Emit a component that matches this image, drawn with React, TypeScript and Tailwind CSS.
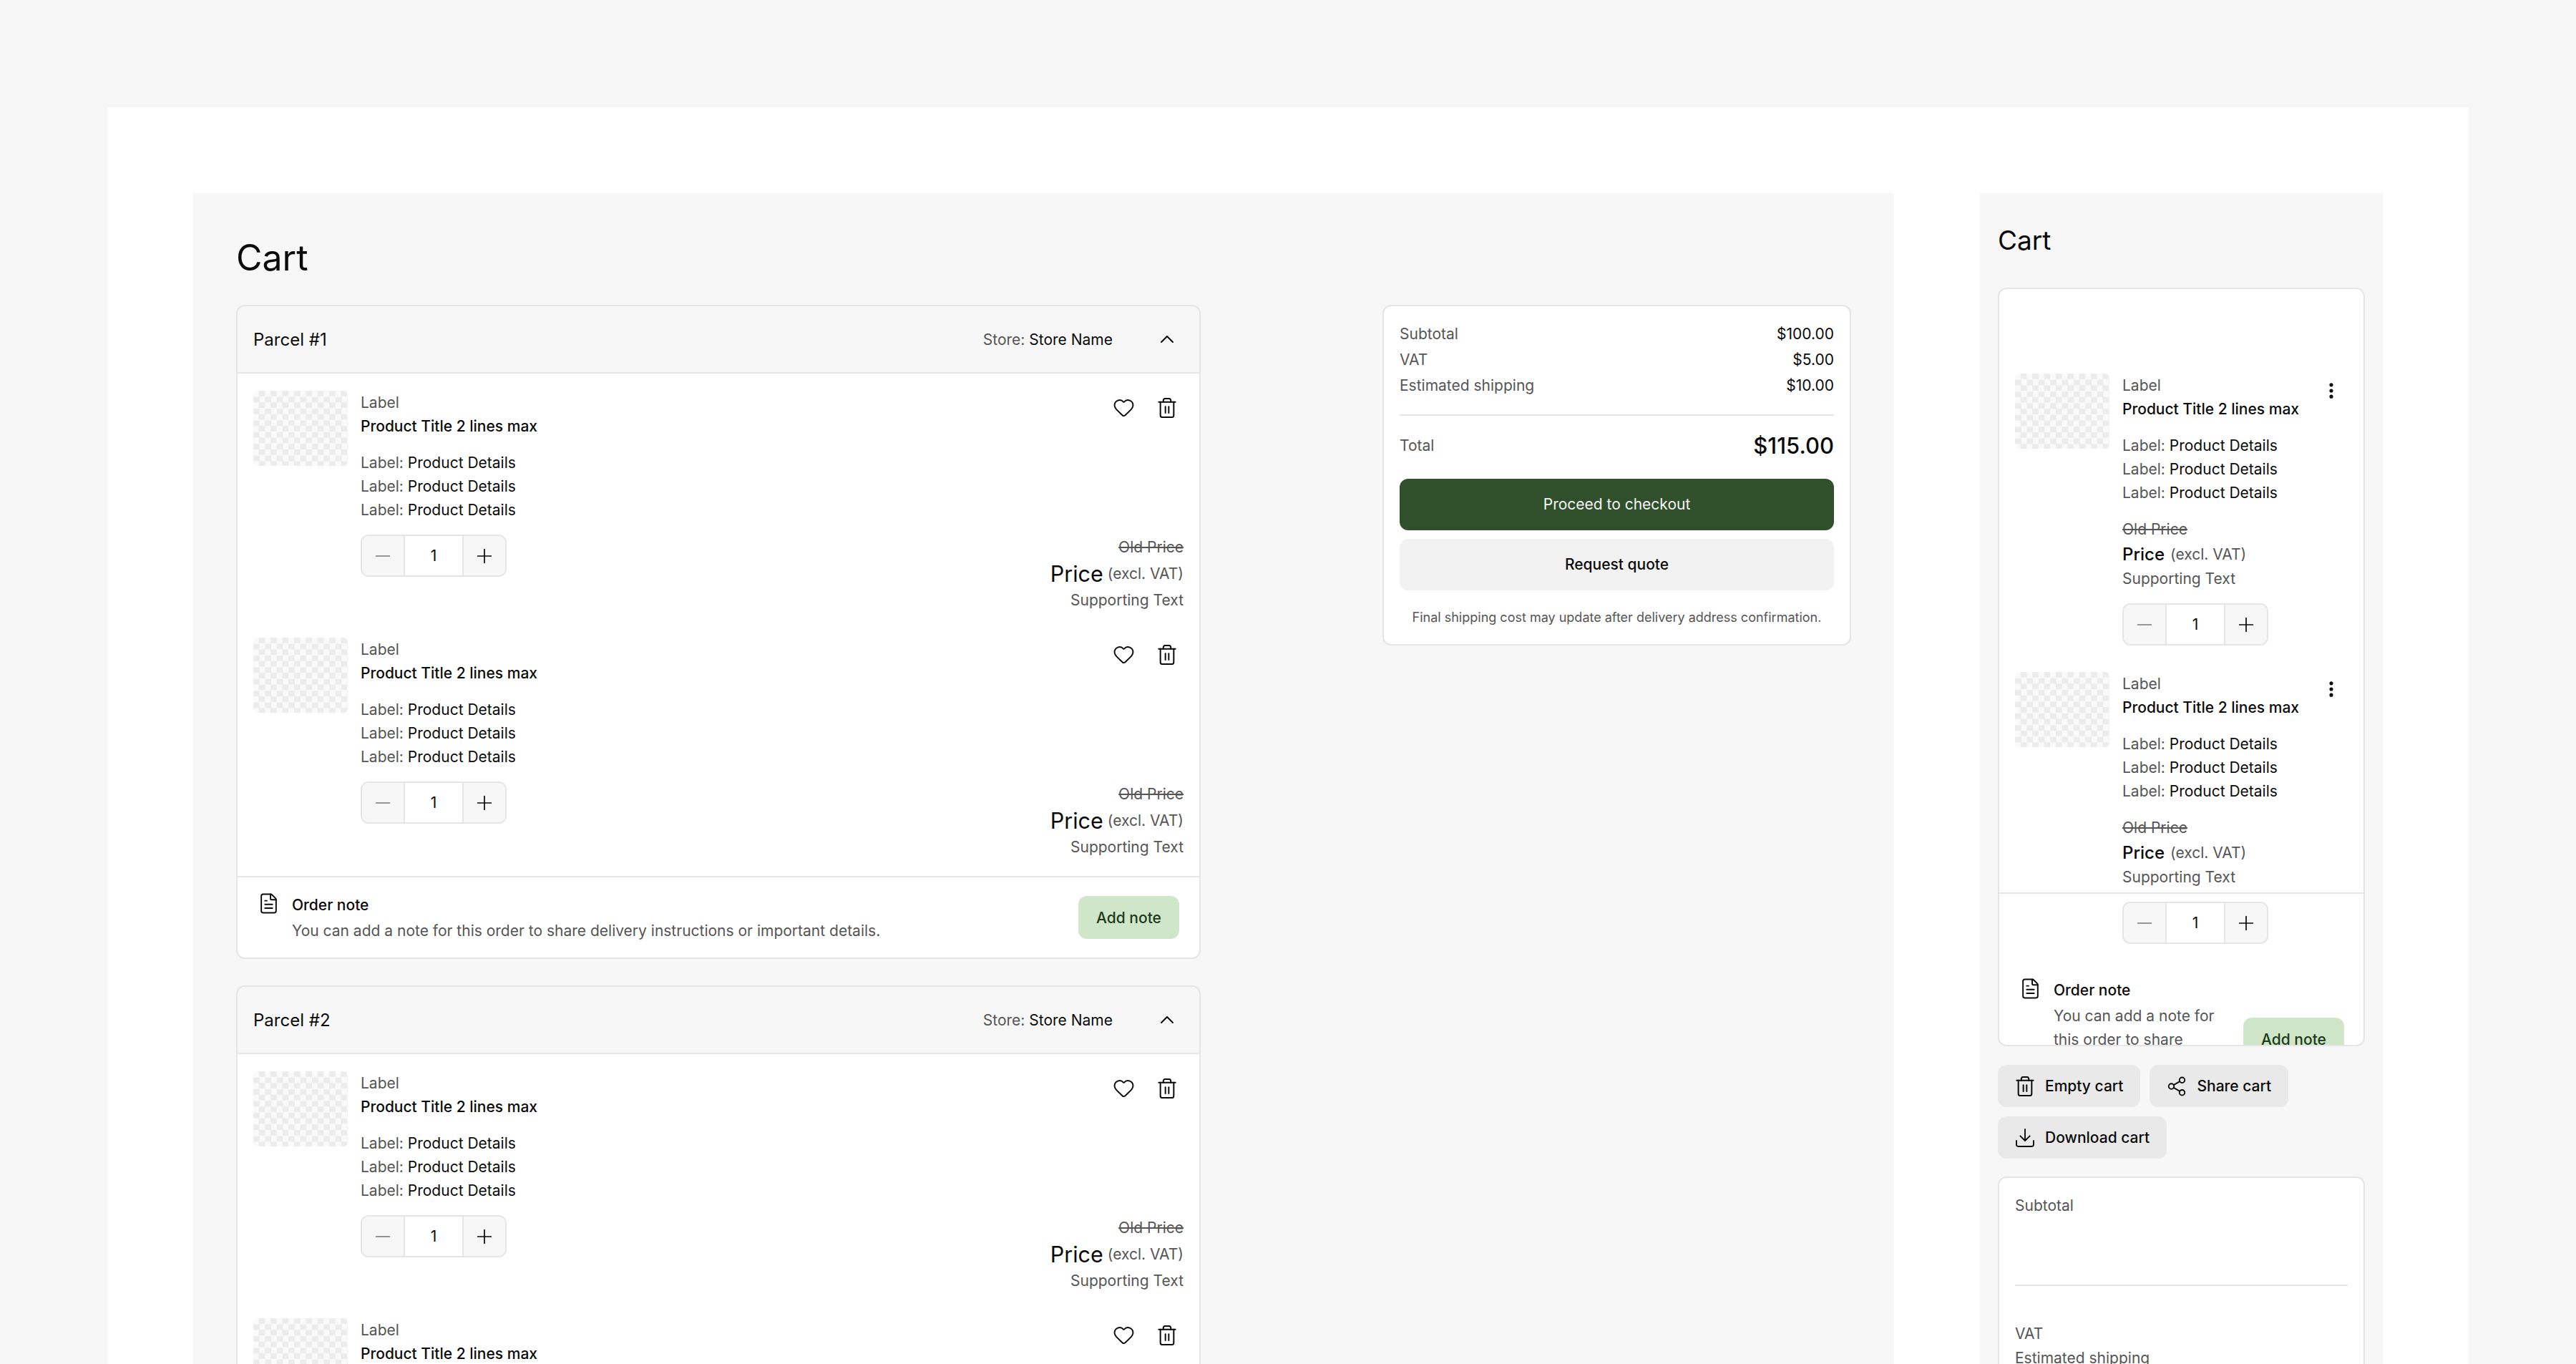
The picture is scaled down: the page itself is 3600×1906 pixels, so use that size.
import { ChevronUp, Download, EllipsisVertical, FileText, Heart, Minus, Plus, Share2 } from "lucide-react";

// the bin in the design has a straight body, lucide's tapers
const TrashIcon = () => (
  <svg
    className="shrink-0"
    width={28}
    height={28}
    viewBox="0 0 24 24"
    fill="none"
    stroke="currentColor"
    strokeWidth={1.7}
    strokeLinecap="round"
    strokeLinejoin="round"
  >
    <path d="M2 5h20" />
    <path d="M7.5 5V3a2.2 2.2 0 0 1 2.2-2.2h4.6A2.2 2.2 0 0 1 16.5 3v2" />
    <path d="M4 5v15.7a2.5 2.5 0 0 0 2.5 2.5h11a2.5 2.5 0 0 0 2.5-2.5V5" />
    <path d="M10 10.5v7.5" />
    <path d="M14 10.5v7.5" />
  </svg>
);

const Thumb = () => (
  <div className="h-[105px] w-[132px] shrink-0 rounded-[6px] bg-[conic-gradient(#ececec_25%,#fafafa_0_50%,#ececec_0_75%,#fafafa_0)] bg-[length:16.4px_16.4px]" />
);

const Stepper = () => (
  <div className="flex h-[59px] w-[204px] overflow-hidden rounded-[11px] border-2 border-[#e5e5e5]">
    <div className="flex w-[58px] items-center justify-center bg-[#f7f7f7]">
      <Minus className="text-[#777777]" size={32} strokeWidth={1.3} />
    </div>
    <div className="flex flex-1 items-center justify-center border-x-2 border-[#e5e5e5] bg-white text-[21px] text-[#0a0a0a]">
      1
    </div>
    <div className="flex w-[58px] items-center justify-center bg-[#f7f7f7]">
      <Plus className="text-[#0a0a0a]" size={32} strokeWidth={1.3} />
    </div>
  </div>
);

const ProductInfo = () => (
  <>
    <p className="text-[#555555]">Label</p>
    <p className="font-medium text-[#0a0a0a]">Product Title 2 lines max</p>
    <div className="mt-[18px]">
      {[0, 1, 2].map((line) => (
        <p key={line} className="text-[#555555]">
          Label: <span className="text-[#0a0a0a]">Product Details</span>
        </p>
      ))}
    </div>
  </>
);

const CartItem = () => (
  <div className="flex h-[309px] pr-[22px] pl-[22px]">
    <Thumb />
    <div className="ml-[18px]">
      <ProductInfo />
      <div className="mt-[18px]">
        <Stepper />
      </div>
    </div>
    <div className="ml-auto flex flex-col items-end justify-between">
      <div className="flex items-center gap-[31px] pt-[8px] pr-[9px] text-[#0a0a0a]">
        <Heart size={31} strokeWidth={1.5} />
        <TrashIcon />
      </div>
      <div className="flex flex-col items-end">
        <p className="text-[#555555] line-through">Old Price</p>
        <p className="flex h-[41px] items-center text-[#555555]">
          <span className="mr-[6px] text-[30.5px] text-[#0a0a0a]">Price</span>
          (excl. VAT)
        </p>
        <p className="text-[#555555]">Supporting Text</p>
      </div>
    </div>
  </div>
);

const Parcel = ({ name, footer }: { name: string; footer?: boolean }) => (
  <div className="w-[1348px] rounded-[12px] border-2 border-[#e5e5e5] bg-white">
    <div className="flex h-[94px] items-center justify-between rounded-t-[10px] border-b-2 border-[#e5e5e5] bg-[#f7f7f7] pr-[29px] pl-[22px]">
      <p className="text-[24px] text-[#0a0a0a]">{name}</p>
      <div className="flex items-center gap-[60px]">
        <p className="text-[#555555]">
          Store: <span className="text-[#0a0a0a]">Store Name</span>
        </p>
        <ChevronUp className="text-[#0a0a0a]" size={32} strokeWidth={1.5} />
      </div>
    </div>
    <div className="flex flex-col gap-[36px] pt-[24px] pb-[24px]">
      <CartItem />
      <CartItem />
    </div>
    {footer && (
      <div className="flex h-[114px] items-center justify-between border-t-2 border-[#e5e5e5] px-[28px]">
        <div className="flex gap-[17px]">
          <FileText className="mt-[-1px] text-[#0a0a0a]" size={31} strokeWidth={1.5} />
          <div>
            <p className="font-medium text-[#0a0a0a]">Order note</p>
            <p className="mt-[3px] text-[#555555]">
              You can add a note for this order to share delivery instructions or important details.
            </p>
          </div>
        </div>
        <button className="h-[60px] w-[141px] rounded-[12px] bg-[#cfe6c9] font-medium text-[#1d3a1c]">Add note</button>
      </div>
    )}
  </div>
);

const Summary = () => (
  <div className="h-fit w-[655px] rounded-[12px] border-2 border-[#e5e5e5] bg-white px-[22px] pt-[21px] pb-[22px] leading-[36px]">
    {[
      ["Subtotal", "$100.00"],
      ["VAT", "$5.00"],
      ["Estimated shipping", "$10.00"],
    ].map(([label, value]) => (
      <div key={label} className="flex justify-between">
        <span className="text-[#555555]">{label}</span>
        <span className="text-[#0a0a0a]">{value}</span>
      </div>
    ))}
    <div className="mt-[22px] border-t-2 border-[#e5e5e5]" />
    <div className="mt-[22px] flex h-[40px] items-center justify-between">
      <span className="text-[#555555]">Total</span>
      <span className="text-[31px] font-medium text-[#0a0a0a]">$115.00</span>
    </div>
    <button className="mt-[26px] h-[72px] w-full rounded-[12px] bg-[#30502c] text-[#f5f5f5]">Proceed to checkout</button>
    <button className="mt-[12px] h-[72px] w-full rounded-[12px] bg-[#f2f2f2] font-medium text-[#0a0a0a]">
      Request quote
    </button>
    <p className="mt-[23px] text-center text-[18px] leading-[30px] text-[#555555]">
      Final shipping cost may update after delivery address confirmation.
    </p>
  </div>
);

const MobileItem = () => (
  <div className="flex h-[380px] pr-[31px] pl-[22px]">
    <Thumb />
    <div className="ml-[18px]">
      <ProductInfo />
      <p className="mt-[18px] text-[#555555] line-through">Old Price</p>
      <p className="flex h-[36px] items-center text-[#555555]">
        <span className="mr-[8px] text-[24px] font-medium text-[#0a0a0a]">Price</span>
        (excl. VAT)
      </p>
      <p className="text-[#555555]">Supporting Text</p>
      <div className="mt-[18px]">
        <Stepper />
      </div>
    </div>
    <EllipsisVertical className="mt-[10px] ml-auto text-[#0a0a0a]" size={28} strokeWidth={2.4} />
  </div>
);

const SideButton = ({ icon, label }: { icon: React.ReactNode; label: string }) => (
  <button className="flex h-[59px] items-center gap-[14px] rounded-[12px] bg-[#e9e9e9] px-[24px] font-medium text-[#0a0a0a]">
    <span className="flex w-[28px] justify-center">{icon}</span>
    {label}
  </button>
);

export default function App() {
  return (
    <div className="h-[1906px] overflow-hidden bg-[#f7f7f7] px-[150px] pt-[150px] font-['Inter',sans-serif] text-[21px] leading-[33px]">
      <div className="flex h-[1900px] gap-[120px] bg-white p-[120px]">
        <main className="flex w-[2377px] flex-col bg-[#f7f7f7] px-[60px] pt-[60px]">
          <h1 className="mb-[36px] text-[50px] leading-[60px] text-[#0a0a0a]">Cart</h1>
          <div className="flex justify-between">
            <div className="flex flex-col gap-[37px]">
              <Parcel name="Parcel #1" footer />
              <Parcel name="Parcel #2" />
            </div>
            <Summary />
          </div>
        </main>

        <aside className="w-[563px] bg-[#f7f7f7] px-[25px] pt-[48px]">
          <h2 className="mb-[48px] text-[37px] leading-[36px] text-[#0a0a0a]">Cart</h2>
          <div className="h-[1060px] overflow-hidden rounded-[12px] border-2 border-[#e5e5e5] bg-white">
            <div className="flex h-[843px] flex-col gap-[37px] pt-[118px]">
              <MobileItem />
              <MobileItem />
            </div>
            <div className="relative flex items-start border-t-2 border-[#e5e5e5] pt-[118px] pr-[27px] pl-[28px]">
              <FileText className="mt-[-1px] shrink-0 text-[#0a0a0a]" size={31} strokeWidth={1.5} />
              <div className="ml-[17px] w-[240px]">
                <p className="font-medium text-[#0a0a0a]">Order note</p>
                <p className="mt-[3px] text-[#555555]">You can add a note for this order to share delivery instructions</p>
              </div>
              <button className="mt-[55px] ml-auto h-[60px] w-[141px] shrink-0 rounded-[12px] bg-[#cfe6c9] font-medium text-[#1d3a1c]">
                Add note
              </button>
            </div>
          </div>
          <div className="mt-[26px] flex flex-wrap gap-[13px]">
            <SideButton icon={<TrashIcon />} label="Empty cart" />
            <SideButton icon={<Share2 className="shrink-0" size={30} strokeWidth={1.5} />} label="Share cart" />
            <SideButton icon={<Download className="shrink-0" size={32} strokeWidth={1.4} />} label="Download cart" />
          </div>
          <div className="mt-[25px] rounded-[12px] border-2 border-[#e5e5e5] bg-white px-[22px] pt-[22px] text-[#555555]">
            <p>Subtotal</p>
            <div className="mt-[94px] border-t-2 border-[#e5e5e5]" />
            <p className="mt-[50px] leading-[34px]">VAT</p>
            <p className="leading-[34px]">Estimated shipping</p>
          </div>
        </aside>
      </div>
    </div>
  );
}
